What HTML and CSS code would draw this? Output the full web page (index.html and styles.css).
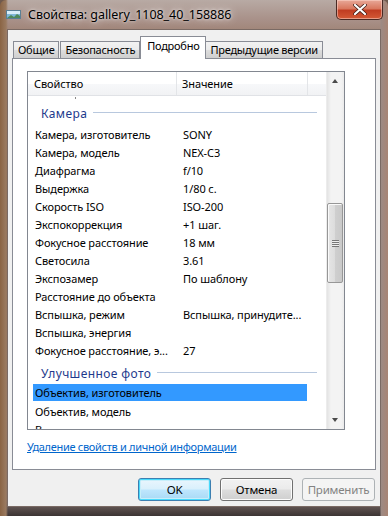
FILE: index.html
```html
<!DOCTYPE html>
<html lang="ru">
<head>
<meta charset="utf-8">
<title>Свойства</title>
<link rel="stylesheet" href="styles.css">
</head>
<body>
<div class="window">
  <div class="titlebar">
    <svg class="app-icon" width="15" height="9" viewBox="0 0 15 9">
      <rect x="0.5" y="0.5" width="14" height="8" fill="#7fb8d8" stroke="#5a7f95"/>
      <rect x="1" y="1" width="13" height="3" fill="#d8eef8"/>
      <path d="M1 8 L5 5 L8 7 L11 4 L14 6 L14 8 Z" fill="#4f8a5a"/>
    </svg>
    <span class="title">Свойства: gallery_1108_40_158886</span>
    <div class="close">
      <svg width="14" height="11" viewBox="0 0 14 11">
        <path d="M2 1 L12 10 M12 1 L2 10" stroke="#3a1a14" stroke-width="3.6" stroke-linecap="round"/>
        <path d="M2 1 L12 10 M12 1 L2 10" stroke="#fff" stroke-width="2.2" stroke-linecap="round"/>
      </svg>
    </div>
  </div>
  <div class="client">
    <div class="tabs">
      <div class="tab">Общие</div>
      <div class="tab">Безопасность</div>
      <div class="tab active">Подробно</div>
      <div class="tab">Предыдущие версии</div>
    </div>
    <div class="panel">
      <div class="list">
        <div class="list-main">
          <div class="header">
            <div class="hcell name">Свойство</div>
            <div class="hcell value">Значение</div>
            <div class="hcell rest"></div>
          </div>
          <div class="body">
            <div class="partial"><span class="dot"></span></div>
            <div class="group"><span>Камера</span><i></i></div>
            <div class="row"><span class="c1">Камера, изготовитель</span><span class="c2">SONY</span></div>
            <div class="row"><span class="c1">Камера, модель</span><span class="c2">NEX-C3</span></div>
            <div class="row"><span class="c1">Диафрагма</span><span class="c2">f/10</span></div>
            <div class="row"><span class="c1">Выдержка</span><span class="c2">1/80 с.</span></div>
            <div class="row"><span class="c1">Скорость ISO</span><span class="c2">ISO-200</span></div>
            <div class="row"><span class="c1">Экспокоррекция</span><span class="c2">+1 шаг.</span></div>
            <div class="row"><span class="c1">Фокусное расстояние</span><span class="c2">18 мм</span></div>
            <div class="row"><span class="c1">Светосила</span><span class="c2">3.61</span></div>
            <div class="row"><span class="c1">Экспозамер</span><span class="c2">По шаблону</span></div>
            <div class="row"><span class="c1">Расстояние до объекта</span><span class="c2"></span></div>
            <div class="row"><span class="c1">Вспышка, режим</span><span class="c2">Вспышка, принудите...</span></div>
            <div class="row"><span class="c1">Вспышка, энергия</span><span class="c2"></span></div>
            <div class="row"><span class="c1">Фокусное расстояние, э...</span><span class="c2">27</span></div>
            <div class="group g2"><span>Улучшенное фото</span><i></i></div>
            <div class="row selected"><span class="c1">Объектив, изготовитель</span><span class="c2"></span></div>
            <div class="row"><span class="c1">Объектив, модель</span><span class="c2"></span></div>
            <div class="row"><span class="c1">В</span><span class="c2"></span></div>
          </div>
        </div>
        <div class="scrollbar">
          <div class="arrow up"></div>
          <div class="track">
            <div class="thumb"><div class="grip"></div></div>
          </div>
          <div class="arrow down"></div>
        </div>
      </div>
      <a class="link" href="#">Удаление свойств и личной информации</a>
    </div>
    <div class="buttons">
      <div class="btn default">OK</div>
      <div class="btn">Отмена</div>
      <div class="btn disabled">Применить</div>
    </div>
  </div>
</div>
</body>
</html>
```

FILE: styles.css
```css
* { box-sizing: border-box; }
html, body { margin: 0; padding: 0; }
body {
  width: 388px;
  height: 516px;
  overflow: hidden;
  font-family: "Noto Sans", "Open Sans", sans-serif;
  font-size: 11px;
  color: #000;
  background: #6f5a4e;
}
.window {
  width: 388px;
  height: 516px;
  display: flex;
  flex-direction: column;
  background:
    linear-gradient(90deg, #8a6444 0px, #9a7a60 6px, rgba(0,0,0,0) 8px, rgba(0,0,0,0) 380px, #9c8a84 381px, #a88474 388px),
    linear-gradient(180deg, #b8aaa4 0px, #a89088 20px, #9a7c6a 40px, #8a6a50 200px, #94786a 420px, #7a6a66 500px, #3c3434 516px);
  border-radius: 6px 6px 0 0;
}
.titlebar {
  height: 29px;
  display: flex;
  align-items: flex-start;
  position: relative;
  flex: none;
}
.app-icon {
  margin: 10px 0 0 6px;
  flex: none;
}
.title {
  margin: 6px 0 0 7px;
  font-size: 12.5px;
  line-height: 18px;
  color: #000;
  text-shadow: 0 0 8px rgba(255,255,255,0.9), 0 0 3px rgba(255,255,255,0.8);
  letter-spacing: -0.05px;
}
.close {
  position: absolute;
  right: 5px;
  top: 0;
  width: 47px;
  height: 20px;
  border: 1px solid #4a2a24;
  border-top: none;
  border-radius: 0 0 5px 5px;
  background: linear-gradient(180deg, #e8a898 0%, #d9785f 45%, #c13d22 55%, #d45a36 100%);
  box-shadow: inset 0 0 0 1px rgba(255,220,210,0.5);
  display: flex;
  align-items: center;
  justify-content: center;
}
.client {
  flex: 1;
  margin: 0 7px 9px 7px;
  background: #f0f0f0;
  border: 1px solid #7a6a64;
  display: flex;
  flex-direction: column;
  padding: 0 5px 0 4px;
}
.tabs {
  display: flex;
  align-items: flex-end;
  height: 28px;
  padding-left: 1px;
  position: relative;
  z-index: 2;
}
.tab {
  height: 17px;
  padding: 0 4px;
  border: 1px solid #898c95;
  border-bottom: none;
  margin-right: 1px;
  background: linear-gradient(180deg, #f2f2f2 0%, #ebebeb 50%, #dddddd 51%, #cfcfcf 100%);
  font-size: 11px;
  line-height: 15px;
  white-space: nowrap;
  letter-spacing: -0.25px;
}
.tab.active {
  margin: 0 -1px -1px -1px;
  padding: 0 6px;
  background: #fff;
  line-height: 18px;
  height: 23px;
  position: relative;
}
.panel {
  width: 364px;
  height: 412px;
  background: #fff;
  border: 1px solid #898c95;
  display: flex;
  flex-direction: column;
  padding: 12px 0 0 14px;
}
.list {
  width: 318px;
  height: 359px;
  border: 1px solid #828790;
  display: flex;
  overflow: hidden;
}
.list-main {
  width: 298px;
  display: flex;
  flex-direction: column;
  overflow: hidden;
}
.header {
  display: flex;
  height: 24px;
  flex: none;
  background: linear-gradient(180deg, #ffffff 0%, #ffffff 50%, #f7f8fa 51%, #f1f2f4 100%);
  border-bottom: 1px solid #e0e2e6;
}
.hcell {
  line-height: 23px;
  padding-left: 6px;
  border-right: 1px solid #e3e5e8;
  white-space: nowrap;
  letter-spacing: -0.1px;
}
.hcell.name { width: 149px; }
.hcell.value { width: 131px; padding-left: 5px; }
.hcell.rest { flex: 1; border-right: none; }
.body {
  flex: 1;
  overflow: hidden;
  position: relative;
}
.partial {
  height: 4px;
  position: relative;
}
.dot {
  position: absolute;
  left: 47px;
  top: 1px;
  width: 1px;
  height: 2px;
  background: #888;
}
.group {
  height: 25px;
  display: flex;
  align-items: center;
  padding-left: 13px;
  color: #1e3a8c;
  font-size: 12px;
  letter-spacing: 0.4px;
}
.group span { line-height: 16px; margin-top: 3px; }
.group i {
  flex: 1;
  height: 1px;
  background: #b8c8de;
  margin: 0 9px 0 6px;
}
.group.g2 span { margin-top: 4px; }
.group.g2 i { margin-top: 1px; }
.row {
  height: 18px;
  display: flex;
  align-items: center;
  white-space: nowrap;
  letter-spacing: -0.1px;
}
.row .c1 {
  width: 149px;
  padding-left: 7px;
  overflow: hidden;
}
.row .c2 {
  padding-left: 6px;
}
.row.selected {
  background: linear-gradient(90deg, #3399ff 0, #3399ff 274px, transparent 274px);
  margin-left: 5px;
  height: 17px;
  margin-bottom: 1px;
}
.row.selected .c1 { width: 144px; padding-left: 2px; }
.scrollbar {
  width: 18px;
  display: flex;
  flex-direction: column;
  background: linear-gradient(90deg, #e3e3e3 0, #f3f3f3 4px, #f3f3f3 14px, #e8e8e8 18px);
  border-left: 1px solid #ececec;
}
.arrow {
  height: 17px;
  flex: none;
  position: relative;
}
.arrow::after {
  content: "";
  position: absolute;
  left: 5px;
  width: 0;
  height: 0;
  border-left: 3.5px solid transparent;
  border-right: 3.5px solid transparent;
}
.arrow.up::after { top: 7px; border-bottom: 4px solid #4a4a4a; }
.arrow.down::after { top: 6px; border-top: 4px solid #4a4a4a; }
.track {
  flex: 1;
  position: relative;
}
.thumb {
  position: absolute;
  left: 0;
  width: 16px;
  top: 114px;
  height: 80px;
  border: 1px solid #979797;
  border-radius: 2px;
  background: linear-gradient(90deg, #e6e6e6 0%, #dcdcdc 50%, #cfcfcf 51%, #c9c9c9 100%);
  box-shadow: inset 1px 1px 0 #fafafa;
  display: flex;
  align-items: center;
  justify-content: center;
}
.grip {
  width: 7px;
  height: 7px;
  background: repeating-linear-gradient(180deg, #777 0, #777 1px, #eee 1px, #eee 2px);
}
.link {
  margin-top: 9px;
  color: #0066cc;
  text-decoration: underline;
  font-size: 11px;
  letter-spacing: -0.3px;
  align-self: flex-start;
}
.buttons {
  display: flex;
  justify-content: flex-end;
  gap: 9px;
  padding-top: 8px;
  padding-right: 0;
}
.btn {
  width: 73px;
  height: 23px;
  border: 1px solid #707070;
  border-radius: 3px;
  background: linear-gradient(180deg, #f2f2f2 0%, #ebebeb 48%, #dddddd 52%, #cfcfcf 100%);
  box-shadow: inset 0 0 0 1px #fcfcfc;
  display: flex;
  align-items: center;
  justify-content: center;
  font-size: 11.5px;
  letter-spacing: -0.2px;
}
.btn.default {
  border-color: #3c7fb1;
  box-shadow: inset 0 0 0 1px #48d9fb, inset 0 0 0 2px #c7eefa;
  background: linear-gradient(180deg, #eaf6fd 0%, #d9f0fc 48%, #bee6fd 52%, #a7d9f5 100%);
}
.btn.disabled {
  border-color: #adb2b5;
  background: #f4f4f4;
  color: #838383;
  box-shadow: none;
}
```
